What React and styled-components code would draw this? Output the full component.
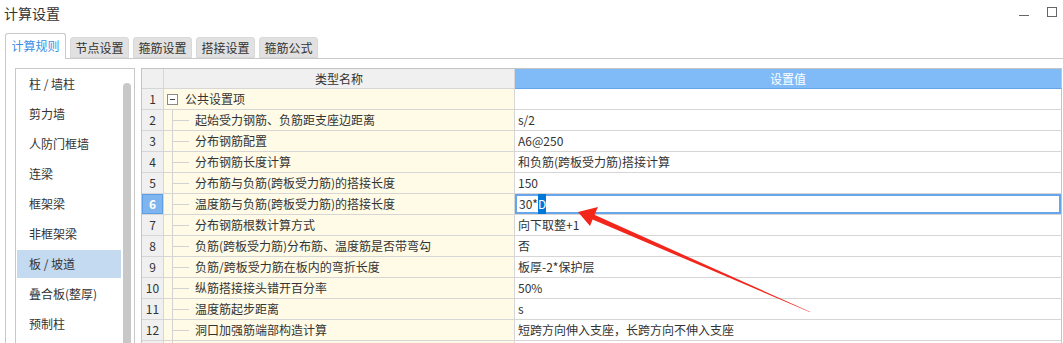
import React from 'react';
import styled, { createGlobalStyle } from 'styled-components';

const GlobalStyle = createGlobalStyle`
  html, body {
    margin: 0;
    padding: 0;
    background: #fff;
  }
  body {
    font-family: "Noto Sans CJK SC", "Noto Sans", sans-serif;
    font-size: 12px;
    color: #333;
    overflow: hidden;
  }
`;

const Window = styled.div`
  position: relative;
  width: 1063px;
  height: 343px;
  overflow: hidden;
`;

const TitleBar = styled.div`
  display: flex;
  align-items: center;
  justify-content: space-between;
  height: 27px;
  padding: 0 6px 0 4px;
`;

const Title = styled.div`
  font-size: 14px;
  line-height: 27px;
  color: #333;
`;

const Controls = styled.div`
  display: flex;
  align-items: flex-start;
  gap: 18px;
  height: 27px;
`;

const Minimize = styled.span`
  display: block;
  width: 10px;
  height: 1px;
  margin-top: 15px;
  background: #666;
`;

const Maximize = styled.span`
  display: block;
  width: 8px;
  height: 8px;
  margin-top: 7px;
  border: 1px solid #666;
`;

const TabBar = styled.div`
  display: flex;
  align-items: flex-end;
  gap: 4px;
  height: 25px;
  margin-top: 6px;
  padding-left: 5px;
`;

const Tab = styled.div`
  box-sizing: border-box;
  width: ${p => (p.$active ? 61 : 59)}px;
  height: ${p => (p.$active ? 26 : 21)}px;
  margin-bottom: ${p => (p.$active ? -1 : 0)}px;
  border: 1px solid ${p => (p.$active ? '#c9c9c9' : '#d9d9d9')};
  border-bottom: ${p => (p.$active ? 'none' : '1px solid #d9d9d9')};
  border-radius: 3px 3px 0 0;
  background: ${p => (p.$active ? '#fff' : '#e1e1e1')};
  color: ${p => (p.$active ? '#3b8ee6' : '#333')};
  font-size: 12px;
  line-height: ${p => (p.$active ? 24 : 19)}px;
  text-align: center;
  position: relative;
`;

const Panel = styled.div`
  display: flex;
  gap: 6px;
  height: 300px;
  margin-left: 5px;
  padding: 9px 0 0 9px;
  border-top: 1px solid #c9c9c9;
  border-left: 1px solid #c9c9c9;
`;

const SideList = styled.div`
  display: flex;
  box-sizing: border-box;
  width: 120px;
  height: 290px;
  border: 1px solid #c9c9c9;
  flex-shrink: 0;
`;

const SideItems = styled.div`
  padding: 1px 0 0 1px;
`;

const SideItem = styled.div`
  width: 104px;
  height: 28px;
  margin-bottom: 2px;
  box-sizing: border-box;
  padding-left: 12px;
  line-height: 28px;
  font-size: 12px;
  color: #333;
  background: ${p => (p.$selected ? '#c3daf1' : 'transparent')};
`;

const ScrollThumb = styled.div`
  width: 8px;
  margin: 14px 3px 0 2px;
  border-radius: 4px 4px 0 0;
  background: #c8c8c8;
`;

const Grid = styled.div`
  display: grid;
  grid-template-columns: 22px 351px 547px;
  grid-template-rows: 20px;
  grid-auto-rows: 21px;
  align-self: flex-start;
  border-top: 1px solid #c4c4c4;
  border-left: 1px solid #c4c4c4;
`;

const Cell = styled.div`
  box-sizing: border-box;
  display: flex;
  align-items: center;
  border-right: 1px solid #d6d6d6;
  border-bottom: 1px solid #d6d6d6;
  font-size: 12px;
  line-height: 20px;
  white-space: nowrap;
  overflow: hidden;
`;

const HeadCell = styled(Cell)`
  justify-content: center;
  background: ${p => (p.$blue ? '#80bbf8' : '#f0f0f0')};
  color: ${p => (p.$blue ? '#fff' : '#333')};
  border-bottom-color: ${p => (p.$blue ? '#64a5ea' : '#d6d6d6')};
  border-right-color: ${p => (p.$blue ? '#c4c4c4' : '#d6d6d6')};
`;

const NumCell = styled(Cell)`
  justify-content: center;
  background: ${p => (p.$active ? '#7fb5ef' : '#f0f0f0')};
  color: ${p => (p.$active ? '#fff' : '#333')};
  font-weight: ${p => (p.$active ? 700 : 400)};
  ${p => p.$active && 'box-shadow: inset 0 0 0 1px #5d9fe6;'}
`;

const NameCell = styled(Cell)`
  background: #fffbe7;
  align-items: stretch;
`;

const ValueCell = styled(Cell)`
  padding-left: 3px;
  background: #fff;
  ${p => p.$editing && 'box-shadow: inset 0 0 0 2px #66a5ea; padding-left: 4px;'}
  ${p => p.$last && 'border-right-color: #c4c4c4;'}
`;

const Toggle = styled.span`
  box-sizing: border-box;
  align-self: center;
  width: 11px;
  height: 11px;
  margin: 0 7px 0 3px;
  border: 1px solid #8a8a8a;
  background: #fff;
  position: relative;
  &::after {
    content: '';
    position: absolute;
    left: 2px;
    right: 2px;
    top: 4px;
    height: 1px;
    background: #444;
  }
`;

const GroupLabel = styled.span`
  align-self: center;
`;

const Branch = styled.span`
  position: relative;
  width: 16px;
  margin: ${p => (p.$first ? '15px' : '0')} 6px 0 8px;
  border-left: 1px solid #d2d2d2;
  &::after {
    content: '';
    position: absolute;
    left: 0;
    top: 10px;
    width: 16px;
    height: 1px;
    background: #d2d2d2;
    display: ${p => (p.$empty ? 'none' : 'block')};
  }
`;

const Label = styled.span`
  align-self: center;
`;

const Selected = styled.span`
  background: #0078d7;
  color: #fff;
`;

const ArrowLayer = styled.svg`
  position: absolute;
  left: 0;
  top: 0;
  pointer-events: none;
`;

const tabs = ['计算规则', '节点设置', '箍筋设置', '搭接设置', '箍筋公式'];

const sideItems = ['柱 / 墙柱', '剪力墙', '人防门框墙', '连梁', '框架梁', '非框架梁', '板 / 坡道', '叠合板(整厚)', '预制柱'];

const rows = [
  { name: '起始受力钢筋、负筋距支座边距离', value: 's/2' },
  { name: '分布钢筋配置', value: 'A6@250' },
  { name: '分布钢筋长度计算', value: '和负筋(跨板受力筋)搭接计算' },
  { name: '分布筋与负筋(跨板受力筋)的搭接长度', value: '150' },
  { name: '温度筋与负筋(跨板受力筋)的搭接长度', value: '30*', editing: true },
  { name: '分布钢筋根数计算方式', value: '向下取整+1' },
  { name: '负筋(跨板受力筋)分布筋、温度筋是否带弯勾', value: '否' },
  { name: '负筋/跨板受力筋在板内的弯折长度', value: '板厚-2*保护层' },
  { name: '纵筋搭接接头错开百分率', value: '50%' },
  { name: '温度筋起步距离', value: 's' },
  { name: '洞口加强筋端部构造计算', value: '短跨方向伸入支座，长跨方向不伸入支座' },
  { name: '', value: '', empty: true },
];

const App = () => {
  return (
    <Window>
      <GlobalStyle />
      <TitleBar>
        <Title>计算设置</Title>
        <Controls>
          <Minimize />
          <Maximize />
        </Controls>
      </TitleBar>
      <TabBar>
        {tabs.map((t, i) => (
          <Tab key={t} $active={i === 0}>{t}</Tab>
        ))}
      </TabBar>
      <Panel>
        <SideList>
          <SideItems>
            {sideItems.map(item => (
              <SideItem key={item} $selected={item === '板 / 坡道'}>{item}</SideItem>
            ))}
          </SideItems>
          <ScrollThumb />
        </SideList>
        <Grid>
          <HeadCell />
          <HeadCell>类型名称</HeadCell>
          <HeadCell $blue>设置值</HeadCell>

          <NumCell>1</NumCell>
          <NameCell>
            <Toggle />
            <GroupLabel>公共设置项</GroupLabel>
          </NameCell>
          <ValueCell $last />

          {rows.map((row, i) => (
            <React.Fragment key={i}>
              <NumCell $active={row.editing}>{row.empty ? '' : i + 2}</NumCell>
              <NameCell>
                <Branch $empty={row.empty} />
                <Label>{row.name}</Label>
              </NameCell>
              <ValueCell $editing={row.editing} $last>
                {row.value}
                {row.editing && <Selected>D</Selected>}
              </ValueCell>
            </React.Fragment>
          ))}
        </Grid>
      </Panel>
      <ArrowLayer width="1063" height="343" viewBox="0 0 1063 343">
        <polygon points="593.8,214.6 592.0,219.2 810.2,312.3 810.0,311.7" fill="#f3261c" />
        <polygon points="578,212 598,207 594,216 590,226" fill="#f3261c" />
      </ArrowLayer>
    </Window>
  );
};

export default App;
